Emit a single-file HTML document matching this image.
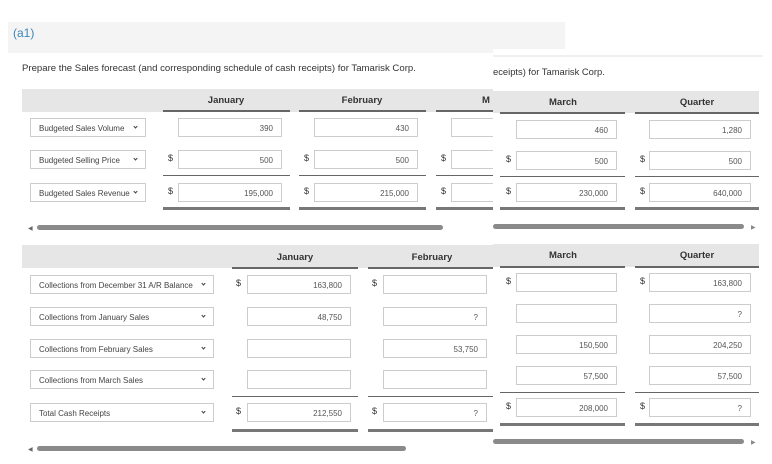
<!DOCTYPE html><html><head><meta charset="utf-8"><style>
body{margin:0;width:772px;height:464px;background:#fff;position:relative;overflow:hidden;font-family:"Liberation Sans",sans-serif;color:#333}
div{position:absolute;box-sizing:border-box}
.h{background:#e6e6e6}
.ht{font-size:9.5px;font-weight:bold;color:#333;text-align:center;width:120px}
.u{height:2px;background:#666}
.d{height:3px;background:#777}
.s{height:1px;background:#666}
.in{border:1px solid #ccc;height:19px;font-size:8px;text-align:right;padding:5px 8px 0 0;color:#555;background:#fff}
.sel{border:1px solid #ccc;height:19px;font-size:8px;padding:5px 0 0 8px;color:#444;background:#fff;white-space:nowrap}
.sel:after{content:"";position:absolute;right:8px;top:6px;width:2px;height:2px;border-right:1.2px solid #444;border-bottom:1.2px solid #444;transform:rotate(45deg)}
.dl{font-size:9px;color:#333}
.sb{height:5px;background:#8a8a8a;border-radius:3px}
</style></head><body>
<div style="left:8px;top:22px;width:557px;height:31px;background:#f4f4f4"></div>
<div style="left:13px;top:26px;font-size:12px;color:#3a86b8">(a1)</div>
<div style="left:22px;top:63px;font-size:9.6px;color:#333;white-space:nowrap">Prepare the Sales forecast (and corresponding schedule of cash receipts) for Tamarisk Corp.</div>

<!-- left table 1 -->
<div class="h" style="left:22px;top:89px;width:471px;height:23px"></div>
<div class="ht" style="left:166px;top:95px">January</div>
<div class="ht" style="left:302px;top:95px">February</div>
<div class="ht" style="left:426px;top:95px">M</div>
<div class="u" style="left:163px;top:110px;width:127px"></div>
<div class="u" style="left:299px;top:110px;width:127px"></div>
<div class="u" style="left:436px;top:110px;width:57px"></div>

<div class="sel" style="left:30px;top:118px;width:116px">Budgeted Sales Volume</div>
<div class="sel" style="left:30px;top:150px;width:116px">Budgeted Selling Price</div>
<div class="sel" style="left:30px;top:183px;width:116px">Budgeted Sales Revenue</div>
<div class="in" style="left:178px;top:118px;width:104px">390</div>
<div class="in" style="left:314px;top:118px;width:104px">430</div>
<div class="in" style="left:451px;top:118px;width:50px"></div>
<div class="dl" style="left:168px;top:153px">$</div><div class="dl" style="left:304px;top:153px">$</div><div class="dl" style="left:441px;top:153px">$</div>
<div class="in" style="left:178px;top:150px;width:104px">500</div>
<div class="in" style="left:314px;top:150px;width:104px">500</div>
<div class="in" style="left:451px;top:150px;width:50px"></div>
<div class="s" style="left:163px;top:175px;width:127px"></div><div class="s" style="left:299px;top:175px;width:127px"></div><div class="s" style="left:436px;top:175px;width:57px"></div>
<div class="dl" style="left:168px;top:186px">$</div><div class="dl" style="left:304px;top:186px">$</div><div class="dl" style="left:441px;top:186px">$</div>
<div class="in" style="left:178px;top:183px;width:104px">195,000</div>
<div class="in" style="left:314px;top:183px;width:104px">215,000</div>
<div class="in" style="left:451px;top:183px;width:50px"></div>
<div class="d" style="left:163px;top:207px;width:127px"></div><div class="d" style="left:299px;top:207px;width:127px"></div><div class="d" style="left:436px;top:207px;width:57px"></div>
<div style="left:28px;top:225px;font-size:6px;color:#666">◀</div>
<div class="sb" style="left:37px;top:225px;width:406px"></div>

<!-- left table 2 -->
<div class="h" style="left:22px;top:245px;width:471px;height:23px"></div>
<div class="ht" style="left:235px;top:252px">January</div>
<div class="ht" style="left:372px;top:252px">February</div>
<div class="u" style="left:232px;top:267px;width:126px"></div>
<div class="u" style="left:368px;top:267px;width:125px"></div>
<div class="sel" style="left:30px;top:275px;width:184px">Collections from December 31 A/R Balance</div>
<div class="sel" style="left:30px;top:307px;width:184px">Collections from January Sales</div>
<div class="sel" style="left:30px;top:339px;width:184px">Collections from February Sales</div>
<div class="sel" style="left:30px;top:370px;width:184px">Collections from March Sales</div>
<div class="sel" style="left:30px;top:403px;width:184px">Total Cash Receipts</div>
<div class="dl" style="left:236px;top:278px">$</div><div class="dl" style="left:372px;top:278px">$</div>
<div class="dl" style="left:236px;top:406px">$</div><div class="dl" style="left:372px;top:406px">$</div>
<div class="in" style="left:247px;top:275px;width:104px">163,800</div>
<div class="in" style="left:383px;top:275px;width:104px"></div>
<div class="in" style="left:247px;top:307px;width:104px">48,750</div>
<div class="in" style="left:383px;top:307px;width:104px">?</div>
<div class="in" style="left:247px;top:339px;width:104px"></div>
<div class="in" style="left:383px;top:339px;width:104px">53,750</div>
<div class="in" style="left:247px;top:370px;width:104px"></div>
<div class="in" style="left:383px;top:370px;width:104px"></div>
<div class="s" style="left:232px;top:396px;width:126px"></div><div class="s" style="left:368px;top:396px;width:125px"></div>
<div class="in" style="left:247px;top:403px;width:104px">212,550</div>
<div class="in" style="left:383px;top:403px;width:104px">?</div>
<div class="d" style="left:232px;top:429px;width:126px"></div><div class="d" style="left:368px;top:429px;width:125px"></div>
<div style="left:28px;top:446px;font-size:6px;color:#666">◀</div>
<div class="sb" style="left:37px;top:446px;width:369px"></div>

<!-- right panel overlay -->
<div style="left:493px;top:49px;width:279px;height:415px;background:#fff"></div>
<div style="left:493px;top:55px;width:270px;height:2px;background:#f0f0f0"></div>
<div style="left:493px;top:66px;font-size:9.4px;color:#333;white-space:nowrap">eceipts) for Tamarisk Corp.</div>
<div class="h" style="left:493px;top:91px;width:266px;height:22px"></div>
<div class="ht" style="left:503px;top:97px">March</div>
<div class="ht" style="left:637px;top:97px">Quarter</div>
<div class="u" style="left:500px;top:112px;width:125px"></div>
<div class="u" style="left:635px;top:112px;width:124px"></div>
<div class="in" style="left:516px;top:120px;width:101px">460</div>
<div class="in" style="left:649px;top:120px;width:102px">1,280</div>
<div class="dl" style="left:506px;top:154px">$</div><div class="dl" style="left:640px;top:154px">$</div>
<div class="in" style="left:516px;top:151px;width:101px">500</div>
<div class="in" style="left:649px;top:151px;width:102px">500</div>
<div class="s" style="left:500px;top:176px;width:125px"></div><div class="s" style="left:635px;top:176px;width:124px"></div>
<div class="dl" style="left:506px;top:186px">$</div><div class="dl" style="left:640px;top:186px">$</div>
<div class="in" style="left:516px;top:183px;width:101px">230,000</div>
<div class="in" style="left:649px;top:183px;width:102px">640,000</div>
<div class="d" style="left:500px;top:207px;width:125px"></div><div class="d" style="left:635px;top:207px;width:124px"></div>
<div class="sb" style="left:493px;top:224px;width:251px"></div>
<div style="left:751px;top:224px;font-size:6px;color:#888">▶</div>

<div class="h" style="left:493px;top:244px;width:266px;height:23px"></div>
<div class="ht" style="left:503px;top:250px">March</div>
<div class="ht" style="left:637px;top:250px">Quarter</div>
<div class="u" style="left:500px;top:266px;width:125px"></div>
<div class="u" style="left:635px;top:266px;width:124px"></div>
<div class="dl" style="left:506px;top:276px">$</div><div class="dl" style="left:640px;top:276px">$</div>
<div class="in" style="left:516px;top:273px;width:101px"></div>
<div class="in" style="left:649px;top:273px;width:102px">163,800</div>
<div class="in" style="left:516px;top:304px;width:101px"></div>
<div class="in" style="left:649px;top:304px;width:102px">?</div>
<div class="in" style="left:516px;top:335px;width:101px">150,500</div>
<div class="in" style="left:649px;top:335px;width:102px">204,250</div>
<div class="in" style="left:516px;top:366px;width:101px">57,500</div>
<div class="in" style="left:649px;top:366px;width:102px">57,500</div>
<div class="s" style="left:500px;top:392px;width:125px"></div><div class="s" style="left:635px;top:392px;width:124px"></div>
<div class="dl" style="left:506px;top:401px">$</div><div class="dl" style="left:640px;top:401px">$</div>
<div class="in" style="left:516px;top:398px;width:101px">208,000</div>
<div class="in" style="left:649px;top:398px;width:102px">?</div>
<div class="d" style="left:500px;top:423px;width:125px"></div><div class="d" style="left:635px;top:423px;width:124px"></div>
<div class="sb" style="left:493px;top:439px;width:251px"></div>
<div style="left:751px;top:439px;font-size:6px;color:#888">▶</div>
</body></html>
